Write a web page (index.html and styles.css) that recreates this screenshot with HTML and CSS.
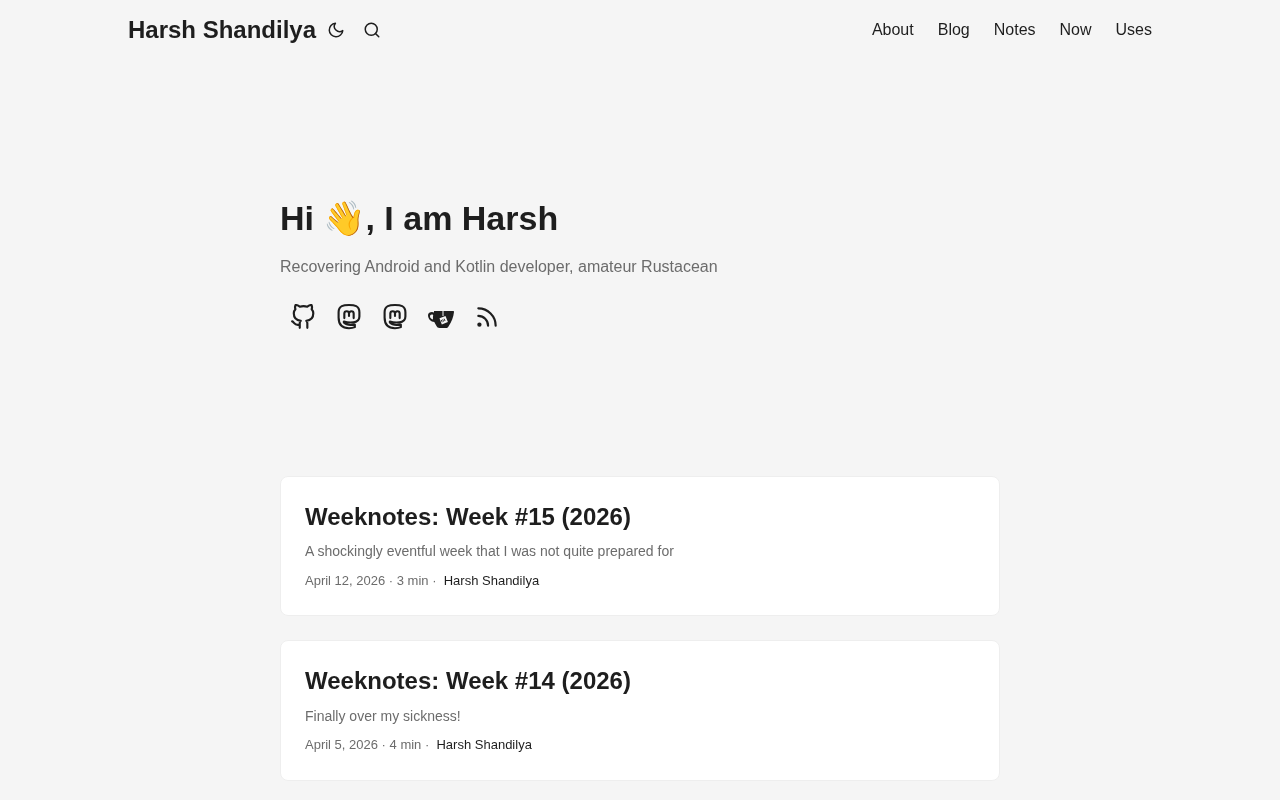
FILE: index.html
```html
<!DOCTYPE html>
<html lang="en">
<head>
    <meta charset="utf-8">
    <title>Harsh Shandilya</title>
    <link rel="stylesheet" href="styles.css">
</head>
<body>
    <header class="header">
        <div class="logo">
            <a href="#" class="logo-name">Harsh Shandilya</a>
            <button class="icon-button" aria-label="Toggle theme">
                <svg viewBox="0 0 24 24" width="18" height="18" class="line-icon"><path d="M21 12.79A9 9 0 1 1 11.21 3 7 7 0 0 0 21 12.79z"></path></svg>
            </button>
            <button class="icon-button" aria-label="Search">
                <svg viewBox="0 0 24 24" width="18" height="18" class="line-icon"><circle cx="11" cy="11" r="8"></circle><line x1="21" y1="21" x2="16.65" y2="16.65"></line></svg>
            </button>
        </div>
        <nav class="menu">
            <a href="#">About</a>
            <a href="#">Blog</a>
            <a href="#">Notes</a>
            <a href="#">Now</a>
            <a href="#">Uses</a>
        </nav>
    </header>

    <main class="main">
        <section class="intro">
            <h1>Hi 👋, I am Harsh</h1>
            <p>Recovering Android and Kotlin developer, amateur Rustacean</p>
            <div class="social">
                <a href="#" aria-label="GitHub">
                    <svg viewBox="0 0 24 24" class="line-icon"><path d="M9 19c-5 1.5-5-2.5-7-3m14 6v-3.87a3.37 3.37 0 0 0-.94-2.61c3.14-.35 6.44-1.54 6.44-7A5.44 5.44 0 0 0 20 4.77 5.07 5.07 0 0 0 19.91 1S18.73.65 16 2.48a13.38 13.38 0 0 0-7 0C6.27.65 5.09 1 5.09 1A5.07 5.07 0 0 0 5 4.77a5.44 5.44 0 0 0-1.5 3.78c0 5.42 3.3 6.61 6.44 7A3.37 3.37 0 0 0 9 18.13V22"></path></svg>
                </a>
                <a href="#" aria-label="Mastodon">
                    <svg viewBox="1.500 1.200 23 24.500" class="line-icon"><path d="M13 2.200C8 2.200 3.200 2.500 3.200 9V14C3.200 21 7 24 13 24 15 24 17 23.700 18.500 23V20.600C15 21.200 10.500 21.200 8.500 19 8 18.500 8 18 8.200 17.800 11 18.600 14 18.800 17 18.500 20 18.200 22.800 16.500 22.800 13V9C22.800 2.500 18 2.200 13 2.200Z"></path><path d="M8.600 14.500V10.200a2.200 2.200 0 0 1 4.400 0V12.500M13 12.500V10.200a2.200 2.200 0 0 1 4.400 0V14.500"></path></svg>
                </a>
                <a href="#" aria-label="Mastodon">
                    <svg viewBox="1.500 1.200 23 24.500" class="line-icon"><path d="M13 2.200C8 2.200 3.200 2.500 3.200 9V14C3.200 21 7 24 13 24 15 24 17 23.700 18.500 23V20.600C15 21.200 10.500 21.200 8.500 19 8 18.500 8 18 8.200 17.800 11 18.600 14 18.800 17 18.500 20 18.200 22.800 16.500 22.800 13V9C22.800 2.500 18 2.200 13 2.200Z"></path><path d="M8.600 14.500V10.200a2.200 2.200 0 0 1 4.400 0V12.500M13 12.500V10.200a2.200 2.200 0 0 1 4.400 0V14.500"></path></svg>
                </a>
                <a href="#" aria-label="Ko-fi">
                    <svg viewBox="0 0 26 26" class="cup-icon">
                        <path fill-rule="evenodd" d="M6 7H25.300C25.900 7 26.100 7.500 26 8 25.500 13 23.500 18 20.500 22.500 19.800 23.500 19 24 18 24H11.500C10 24 9 23 8.500 22 7.500 20.300 6.800 19 6.300 18 3 18 0 15 0 11 0 9 2 8 4 8 4.600 8 5.300 8.200 6 8.500ZM3.800 10.600C2.700 10.600 2 11.500 2 12.600 2 14 3.200 15.200 5 15.400 4.900 13.800 4.900 12.200 5.200 11 4.800 10.700 4.300 10.600 3.800 10.600Z"></path>
                        <path class="cup-string" d="M15 7V12"></path>
                        <path class="cup-label" d="M11.500 14.300l6-2.300 2.400 6-6.100 2.400z"></path>
                        <path class="cup-mark" d="M14.200 18.200l-.9-2.300M15.600 17.600l-.9-2.300M17 17l-.9-2.300"></path>
                    </svg>
                </a>
                <a href="#" aria-label="RSS">
                    <svg viewBox="0 0 24 24" class="line-icon"><path d="M4 11a9 9 0 0 1 9 9"></path><path d="M4 4a16 16 0 0 1 16 16"></path><circle cx="5" cy="19" r="1"></circle></svg>
                </a>
            </div>
        </section>

        <article class="post-entry">
            <h2>Weeknotes: Week #15 (2026)</h2>
            <p class="post-summary">A shockingly eventful week that I was not quite prepared for</p>
            <footer class="post-meta">April 12, 2026 · 3 min · <span class="post-author">Harsh Shandilya</span></footer>
        </article>

        <article class="post-entry">
            <h2>Weeknotes: Week #14 (2026)</h2>
            <p class="post-summary">Finally over my sickness!</p>
            <footer class="post-meta">April 5, 2026 · 4 min · <span class="post-author">Harsh Shandilya</span></footer>
        </article>
    </main>
</body>
</html>
```

FILE: styles.css
```css
* {
    box-sizing: border-box;
}

body {
    font-family: "Liberation Sans", Arial, sans-serif;
    font-size: 16px;
    margin: 0;
    background-color: #f5f5f5;
    color: #1e1e1e;
}

a {
    color: inherit;
    text-decoration: none;
}

.header {
    display: flex;
    justify-content: space-between;
    align-items: center;
    max-width: 1024px;
    height: 60px;
    margin: 0 auto;
    will-change: opacity;
}

.logo {
    display: flex;
    align-items: center;
}

.logo-name {
    font-size: 24px;
    font-weight: 700;
    margin-right: 11px;
}

.icon-button {
    display: flex;
    width: 18px;
    height: 18px;
    padding: 0;
    margin-right: 18px;
    border: none;
    background: none;
    color: inherit;
}

.line-icon {
    fill: none;
    stroke: currentColor;
    stroke-width: 2;
    stroke-linecap: round;
    stroke-linejoin: round;
}

.menu {
    display: flex;
    gap: 24px;
}

.main {
    width: 720px;
    margin: 0 auto;
    will-change: opacity;
}

.intro {
    padding-top: 134px;
    padding-bottom: 136px;
}

.intro h1 {
    font-size: 34px;
    line-height: 48px;
    font-weight: 700;
    margin: 0;
}

.intro p {
    color: #6c6c6c;
    line-height: 24px;
    margin: 13px 0 0;
}

.social {
    display: flex;
    margin-top: 15px;
}

.social a {
    display: flex;
    padding: 10px;
}

.social svg {
    width: 26px;
    height: 26px;
}

.cup-icon {
    fill: currentColor;
}

.cup-string {
    fill: none;
    stroke: #f5f5f5;
    stroke-width: 1;
}

.cup-label {
    fill: #f5f5f5;
}

.cup-mark {
    fill: none;
    stroke: currentColor;
    stroke-width: 0.9;
}

.post-entry {
    background-color: #fff;
    border: 1px solid #eeeeee;
    border-radius: 8px;
    padding: 24px 24px 24.5px;
    margin-bottom: 24px;
}

.post-entry h2 {
    font-size: 24px;
    line-height: 32px;
    font-weight: 700;
    margin: 0;
}

.post-summary {
    font-size: 14px;
    line-height: 22px;
    color: #6c6c6c;
    margin: 7.2px 0 0;
}

.post-meta {
    font-size: 13px;
    line-height: 20px;
    color: #6c6c6c;
    margin-top: 8.8px;
}

.post-author {
    color: #1e1e1e;
    margin-left: 3.6px;
}
```
